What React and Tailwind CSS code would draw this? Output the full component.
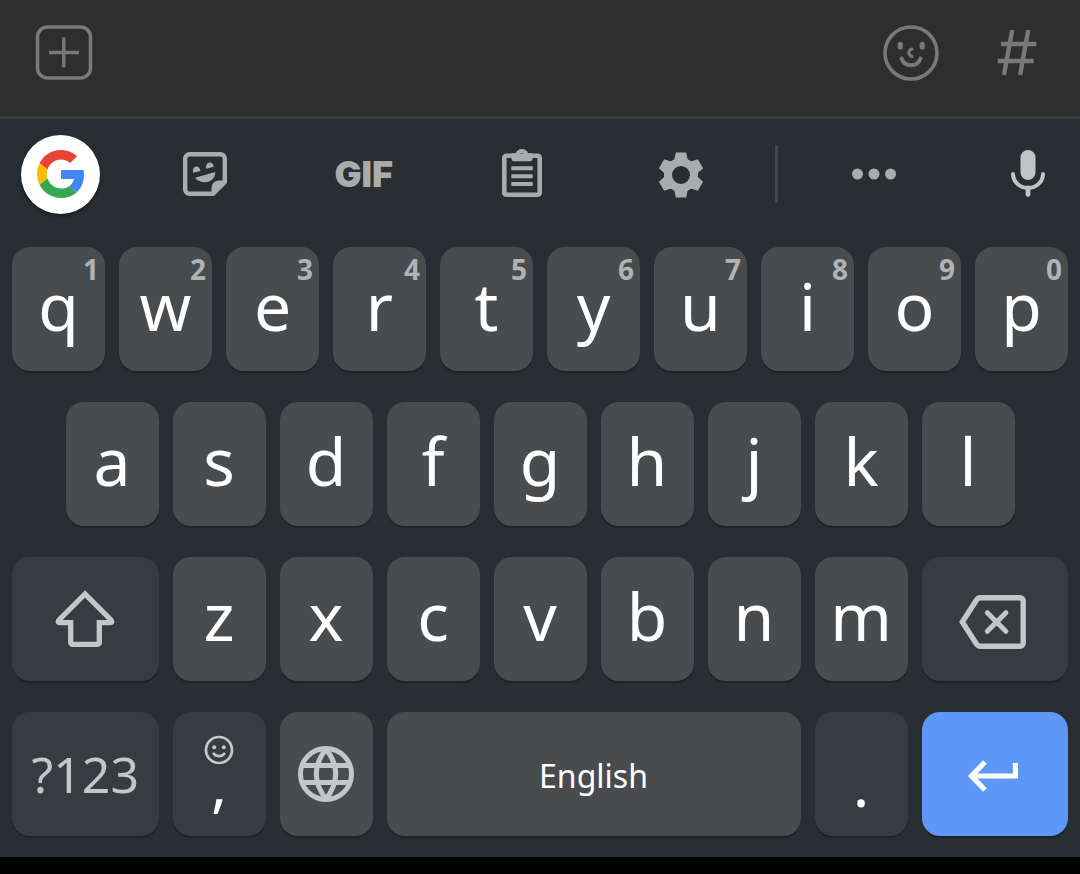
import clsx from "clsx";

const topRow = ["q", "w", "e", "r", "t", "y", "u", "i", "o", "p"];
const homeRow = ["a", "s", "d", "f", "g", "h", "j", "k", "l"];
const bottomRow = ["z", "x", "c", "v", "b", "n", "m"];

function PlusBoxIcon() {
  return (
    <svg width="58" height="58" viewBox="0 0 58 58" fill="none" stroke="currentColor">
      <rect x="2.5" y="3" width="53" height="51" rx="10" strokeWidth="3.6" />
      <path d="M14 28.500h30M28.800 13.500v30" strokeWidth="3.4" />
    </svg>
  );
}

function FaceIcon() {
  return (
    <svg width="58" height="58" viewBox="0 0 58 58" fill="none" stroke="currentColor" strokeLinecap="round">
      <circle cx="29" cy="29" r="26" strokeWidth="3.6" />
      <path d="M18.2 20.4v2.6M40.2 20.4v2.6" strokeWidth="5.2" />
      <path d="M30 25c-4.200 1-4.200 6.400 0 7.400" strokeWidth="3" />
      <path d="M19.600 34.600c3.200 9 15.600 9 18.800 0" strokeWidth="4" />
    </svg>
  );
}

function HashIcon() {
  return (
    <svg width="40" height="46" viewBox="0 0 40 46" fill="none" stroke="currentColor" strokeWidth="4.300">
      <path d="M15.200 0L7 45M31.300 0L23.100 45M4 14h35.300M.7 31h36" />
    </svg>
  );
}

function GoogleIcon() {
  return (
    <svg width="48" height="48" viewBox="0 0 48 48">
      <path
        fill="#EA4335"
        d="M24 9.5c3.54 0 6.71 1.22 9.21 3.6l6.85-6.85C35.9 2.38 30.47 0 24 0 14.62 0 6.51 5.38 2.56 13.22l7.98 6.19C12.43 13.72 17.74 9.5 24 9.5z"
      />
      <path
        fill="#4285F4"
        d="M46.98 24.55c0-1.57-.15-3.09-.38-4.55H24v9.02h12.94c-.58 2.96-2.26 5.48-4.78 7.18l7.73 6c4.51-4.18 7.09-10.36 7.09-17.65z"
      />
      <path
        fill="#FBBC05"
        d="M10.53 28.59c-.48-1.45-.76-2.99-.76-4.59s.27-3.14.76-4.59l-7.98-6.19C.92 16.46 0 20.12 0 24c0 3.88.92 7.54 2.56 10.78l7.97-6.19z"
      />
      <path
        fill="#34A853"
        d="M24 48c6.48 0 11.93-2.13 15.89-5.81l-7.73-6c-2.15 1.45-4.92 2.3-8.16 2.3-6.26 0-11.57-4.22-13.47-9.91l-7.98 6.19C6.51 42.62 14.62 48 24 48z"
      />
    </svg>
  );
}

function StickerIcon() {
  return (
    <svg width="44" height="44" viewBox="0 0 44 44" fill="currentColor">
      <path
        fill="none"
        stroke="currentColor"
        strokeWidth="4.400"
        d="M30 41.800H6.500a4.300 4.300 0 0 1-4.300-4.300V6.500a4.300 4.300 0 0 1 4.300-4.300h31a4.300 4.300 0 0 1 4.300 4.300V30"
      />
      <path d="M28.500 44v-7.500c0-5 3-8 8-8H44V31L31 44z" />
      <path d="M10 20.800c-1.200-7.500 6.500-8.500 7.500-1.800zM23.200 16.800c-1.200-7.500 6.800-8.500 7.500-2z" />
      <path d="M12 25.700L32.300 20C32.300 26 27.500 30.300 22 30.300c-4 0-8-1.800-10-4.600z" />
    </svg>
  );
}

function ClipboardIcon() {
  return (
    <svg width="40" height="50" viewBox="0 0 40 50" fill="currentColor">
      <rect x="2.300" y="6.700" width="35.400" height="39" rx="2" fill="none" stroke="currentColor" strokeWidth="4.600" />
      <path
        fillRule="evenodd"
        d="M9.500 4.300h4.300c1-2.600 3.200-4.300 6.200-4.300s5.200 1.700 6.200 4.300h4.300v5.700a2.300 2.300 0 0 1-2.300 2.300H11.800A2.300 2.300 0 0 1 9.500 10zM20 4a2.300 2.300 0 1 0 0 4.600A2.300 2.300 0 0 0 20 4z"
      />
      <path stroke="currentColor" strokeWidth="4" d="M9.300 19.300h21.400M9.300 27.200h21.400M9.300 35h21.400" />
    </svg>
  );
}

function GearIcon() {
  return (
    <svg width="46" height="48" viewBox="-23 -25 46 48" fill="currentColor">
      <circle r="13" fill="none" stroke="currentColor" strokeWidth="8" />
      {[0, 60, 120, 180, 240, 300].map((angle) => (
        <path key={angle} transform={`rotate(${angle})`} d="M-5.200-22.500H5.200L6.500-16 9-12.500H-9L-6.500-16z" />
      ))}
    </svg>
  );
}

function DotsIcon() {
  return (
    <svg width="46" height="12" viewBox="0 0 46 12" fill="currentColor">
      <circle cx="6.500" cy="6" r="5.500" />
      <circle cx="23" cy="6" r="5.500" />
      <circle cx="39.500" cy="6" r="5.500" />
    </svg>
  );
}

function MicIcon() {
  return (
    <svg width="36" height="48" viewBox="0 0 36 48" fill="none" stroke="currentColor" strokeLinecap="round">
      <rect x="10.500" y="0" width="15" height="30" rx="7.500" fill="currentColor" stroke="none" />
      <path d="M3 24a15 14 0 0 0 30 0" strokeWidth="4" />
      <path d="M18 38v6.500" strokeWidth="4.800" />
    </svg>
  );
}

function ShiftIcon() {
  return (
    <svg width="60" height="58" viewBox="0 0 60 58" fill="none" stroke="currentColor" strokeWidth="5.300">
      <path d="M30 4L4 30Q2 32.600 5 32.600H15.700V52.400a2 2 0 0 0 2 2H42.300a2 2 0 0 0 2-2V32.600H55Q58 32.600 56 30Z" />
    </svg>
  );
}

function BackspaceIcon() {
  return (
    <svg width="68" height="54" viewBox="0 0 68 54" fill="none" stroke="currentColor" strokeWidth="5.400">
      <path d="M3.300 27L17.500 5Q19 2.800 21.500 2.800H61a3.200 3.200 0 0 1 3.200 3.200V48a3.200 3.200 0 0 1-3.200 3.200H21.500Q19 51.200 17.500 49Z" />
      <path strokeLinecap="round" strokeWidth="5" d="M28.300 17.700l18.600 18.600M46.900 17.700L28.300 36.300" />
    </svg>
  );
}

function SmileIcon() {
  return (
    <svg width="30" height="30" viewBox="0 0 30 30" fill="none" stroke="currentColor" strokeWidth="2.700">
      <circle cx="15" cy="15" r="13" />
      <path strokeLinecap="round" d="M9.800 18.800c2.500 3 7.900 3 10.400 0" />
      <circle cx="10.200" cy="12.200" r="2" fill="currentColor" stroke="none" />
      <circle cx="19.800" cy="12.200" r="2" fill="currentColor" stroke="none" />
    </svg>
  );
}

function GlobeIcon() {
  return (
    <svg width="58" height="58" viewBox="-29 -29 58 58" fill="none" stroke="currentColor" strokeWidth="5">
      <circle r="25.500" />
      <path d="M0-25Q-19.400 0 0 25M0-25Q19.400 0 0 25M-24-8.500H24M-24 8.500H24" />
    </svg>
  );
}

function EnterIcon() {
  return (
    <svg width="50" height="32" viewBox="0 0 50 32" fill="none" stroke="currentColor" strokeWidth="5.200">
      <path d="M17 2L3.500 16 17 30M4 16H47.400V3" />
    </svg>
  );
}

function Key({ children, hint, label, tone = "light", className }) {
  return (
    <button
      type="button"
      aria-label={label}
      className={clsx(
        "relative flex h-[124px] items-center justify-center rounded-[18px] shadow-[0_2px_0_#1f2326]",
        tone === "light" && "bg-[#494c4e] text-white",
        tone === "dark" && "bg-[#373c40] text-[#c4c6c8]",
        tone === "accent" && "bg-[#5e97f6] text-white",
        className,
      )}
    >
      {hint && (
        <span className="absolute top-2.5 right-1.5 text-[28px] leading-6 font-bold text-[#b0b2b4]">
          {hint}
        </span>
      )}
      {children}
    </button>
  );
}

function LetterKey({ letter, hint, className }) {
  return (
    <Key hint={hint} className={clsx("col-span-2 pb-2 text-[66px] leading-none", className)}>
      {letter}
    </Key>
  );
}

function ToolButton({ label, className, children }) {
  return (
    <button type="button" aria-label={label} className={clsx("flex h-20 items-center justify-center", className)}>
      {children}
    </button>
  );
}

function MessageBar() {
  return (
    <div className="flex h-[116px] items-start bg-[#2e2e2e] pt-6 pr-[43px] pl-[35px] text-[#77797f]">
      <button type="button" aria-label="Attach">
        <PlusBoxIcon />
      </button>
      <input type="text" aria-label="Message" className="h-[58px] min-w-0 flex-1 bg-transparent px-6 text-3xl text-white outline-none" />
      <button type="button" aria-label="Emoticons">
        <FaceIcon />
      </button>
      <button type="button" aria-label="Hashtag search" className="ml-[57px] flex h-[58px] items-center">
        <HashIcon />
      </button>
    </div>
  );
}

function Toolbar() {
  return (
    <div className="flex items-center pt-[15px] pr-3 pb-[33px] pl-[21px] text-[#a9abad]">
      <button
        type="button"
        aria-label="Google"
        className="flex size-[79px] shrink-0 items-center justify-center rounded-full bg-white shadow-[0_2px_4px_rgba(0,0,0,0.4)]"
      >
        <GoogleIcon />
      </button>
      <div className="ml-[26px] grid flex-1 grid-cols-4">
        <ToolButton label="Stickers">
          <StickerIcon />
        </ToolButton>
        <ToolButton className="font-[Inter,sans-serif] text-[36px] font-black">GIF</ToolButton>
        <ToolButton label="Clipboard">
          <ClipboardIcon />
        </ToolButton>
        <ToolButton label="Settings">
          <GearIcon />
        </ToolButton>
      </div>
      <div className="ml-[15px] h-[58px] w-[3px] bg-[#43474b]" />
      <ToolButton label="More" className="ml-14 w-20">
        <DotsIcon />
      </ToolButton>
      <ToolButton label="Voice input" className="ml-[74px] w-20 text-[#c1c3c5]">
        <MicIcon />
      </ToolButton>
    </div>
  );
}

export default function App() {
  return (
    <div className="min-h-screen bg-black font-['Noto_Sans',sans-serif]">
      <MessageBar />
      <div className="border-t-[3px] border-[#363b40] bg-[#292e32] pb-[21px]">
        <Toolbar />
        {/* 20 half-key columns, so the home row can be shifted by half a key */}
        <div className="grid grid-cols-20 gap-x-[14px] gap-y-[31px] px-3">
          {topRow.map((letter, i) => (
            <LetterKey key={letter} letter={letter} hint={String((i + 1) % 10)} />
          ))}

          {homeRow.map((letter, i) => (
            <LetterKey key={letter} letter={letter} className={i === 0 && "col-start-2"} />
          ))}

          <Key label="Shift" tone="dark" className="col-span-3 col-start-1">
            <ShiftIcon />
          </Key>
          {bottomRow.map((letter) => (
            <LetterKey key={letter} letter={letter} />
          ))}
          <Key label="Backspace" tone="dark" className="col-span-3 pt-1.5 pr-1">
            <BackspaceIcon />
          </Key>

          <Key tone="dark" className="col-span-3 text-[50px]">
            ?123
          </Key>
          <Key tone="dark" className="col-span-2 flex-col pb-3">
            <SmileIcon />
            <span className="text-[60px] leading-9 text-white">,</span>
          </Key>
          <Key label="Change language" className="col-span-2">
            <span className="text-[#c4c6c8]">
              <GlobeIcon />
            </span>
          </Key>
          <Key className="col-span-8 pt-1 text-[32px]">English</Key>
          <Key tone="dark" className="col-span-2 pt-5">
            <span className="text-[60px] leading-9 text-white">.</span>
          </Key>
          <Key label="Enter" tone="accent" className="col-span-3 pt-1 pr-1">
            <EnterIcon />
          </Key>
        </div>
      </div>
    </div>
  );
}
